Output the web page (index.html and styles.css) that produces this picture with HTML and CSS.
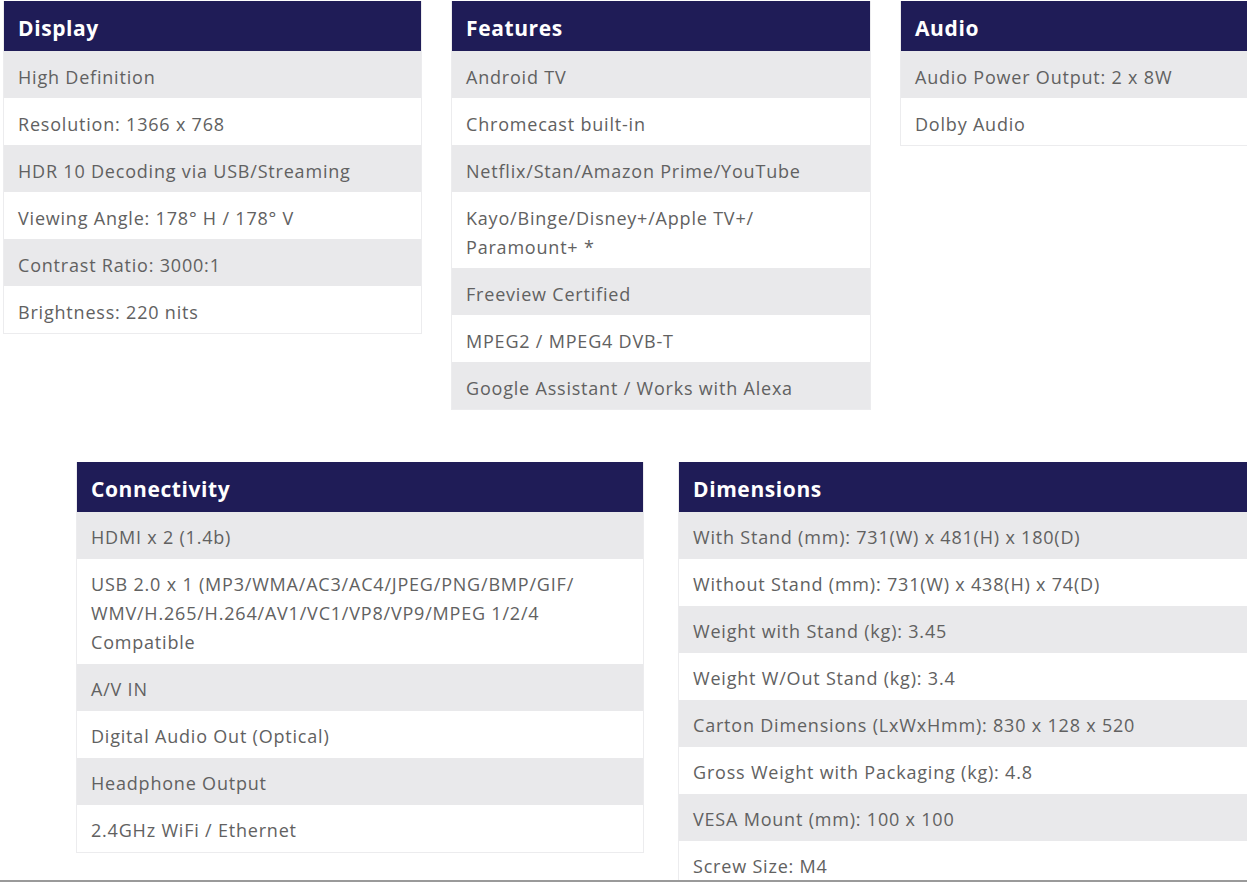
FILE: index.html
```html
<!DOCTYPE html>
<html lang="en">
<head>
<meta charset="utf-8">
<title>Specifications</title>
<link rel="stylesheet" href="styles.css">
</head>
<body>
<div class="page">
  <div class="row row-top">
    <section class="spec spec-a">
      <h2 class="spec-head">Display</h2>
      <div class="spec-row">High Definition</div>
      <div class="spec-row">Resolution: 1366 x 768</div>
      <div class="spec-row">HDR 10 Decoding via USB/Streaming</div>
      <div class="spec-row">Viewing Angle: 178° H / 178° V</div>
      <div class="spec-row">Contrast Ratio: 3000:1</div>
      <div class="spec-row">Brightness: 220 nits</div>
    </section>
    <section class="spec spec-b">
      <h2 class="spec-head">Features</h2>
      <div class="spec-row">Android TV</div>
      <div class="spec-row">Chromecast built-in</div>
      <div class="spec-row">Netflix/Stan/Amazon Prime/YouTube</div>
      <div class="spec-row">Kayo/Binge/Disney+/Apple TV+/<br>Paramount+ *</div>
      <div class="spec-row">Freeview Certified</div>
      <div class="spec-row">MPEG2 / MPEG4 DVB-T</div>
      <div class="spec-row">Google Assistant / Works with Alexa</div>
    </section>
    <section class="spec spec-c">
      <h2 class="spec-head">Audio</h2>
      <div class="spec-row">Audio Power Output: 2 x 8W</div>
      <div class="spec-row">Dolby Audio</div>
    </section>
  </div>
  <div class="row row-bottom">
    <section class="spec spec-d">
      <h2 class="spec-head">Connectivity</h2>
      <div class="spec-row">HDMI x 2 (1.4b)</div>
      <div class="spec-row">USB 2.0 x 1 (MP3/WMA/AC3/AC4/JPEG/PNG/BMP/GIF/<br>WMV/H.265/H.264/AV1/VC1/VP8/VP9/MPEG 1/2/4<br>Compatible</div>
      <div class="spec-row">A/V IN</div>
      <div class="spec-row">Digital Audio Out (Optical)</div>
      <div class="spec-row">Headphone Output</div>
      <div class="spec-row">2.4GHz WiFi / Ethernet</div>
    </section>
    <section class="spec spec-e">
      <h2 class="spec-head">Dimensions</h2>
      <div class="spec-row">With Stand (mm): 731(W) x 481(H) x 180(D)</div>
      <div class="spec-row">Without Stand (mm): 731(W) x 438(H) x 74(D)</div>
      <div class="spec-row">Weight with Stand (kg): 3.45</div>
      <div class="spec-row">Weight W/Out Stand (kg): 3.4</div>
      <div class="spec-row">Carton Dimensions (LxWxHmm): 830 x 128 x 520</div>
      <div class="spec-row">Gross Weight with Packaging (kg): 4.8</div>
      <div class="spec-row">VESA Mount (mm): 100 x 100</div>
      <div class="spec-row">Screw Size: M4</div>
    </section>
  </div>
</div>
</body>
</html>
```
FILE: styles.css
```css
html, body {
  margin: 0;
  padding: 0;
  background: #ffffff;
}
body {
  width: 1247px;
  height: 882px;
  overflow: hidden;
  position: relative;
  font-family: "Open Sans", "Liberation Sans", sans-serif;
}
body::after {
  content: "";
  position: absolute;
  left: 0;
  right: 0;
  top: 880px;
  height: 2px;
  background: #9a9a9a;
}
.page {
  padding-top: 1px;
}
.row {
  display: flex;
  align-items: flex-start;
}
.row-top {
  padding-left: 3px;
  gap: 29px;
}
.row-bottom {
  margin-top: 52px;
  padding-left: 76px;
  gap: 34px;
}
.spec {
  flex: none;
  border: 1px solid #ececee;
  border-top: none;
  box-sizing: border-box;
}
.spec-a { width: 419px; }
.spec-b { width: 420px; }
.spec-c { width: 420px; }
.spec-d { width: 568px; }
.spec-e { width: 580px; }
.spec-head {
  margin: 0;
  height: 50px;
  box-sizing: border-box;
  background: #1f1c57;
  color: #ffffff;
  font-size: 21px;
  font-weight: 700;
  letter-spacing: 0.6px;
  line-height: 50px;
  padding: 2px 0 0 14px;
}
.spec-row {
  padding: 12px 14px 6px;
  font-size: 18px;
  letter-spacing: 0.8px;
  line-height: 29px;
  color: #616161;
  background: #ffffff;
}
.row-bottom .spec-row {
  padding: 11px 14px 7px;
}
.spec-row:nth-of-type(odd) {
  background: #e9e9eb;
}
```
